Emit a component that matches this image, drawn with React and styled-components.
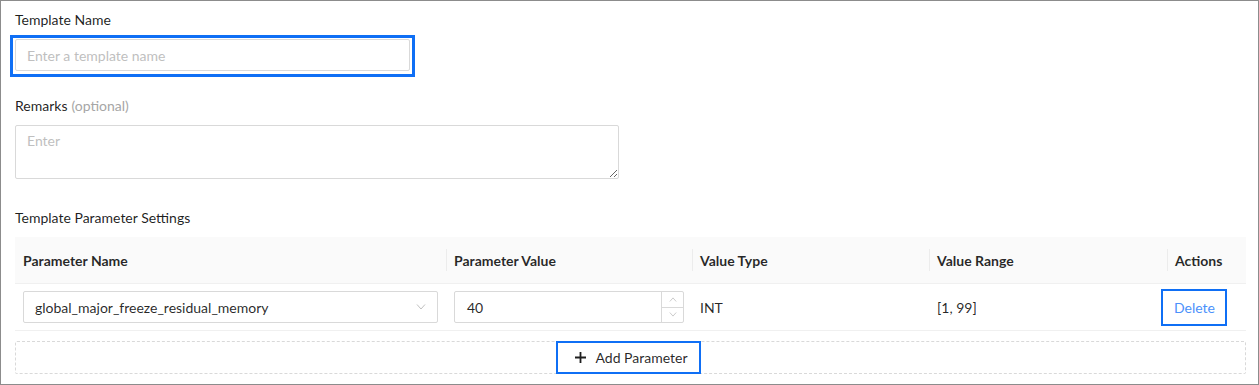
import React from 'react'
import styled, { createGlobalStyle } from 'styled-components'

const GlobalStyle = createGlobalStyle`
    html, body {
        margin: 0;
        padding: 0;
        background: #ffffff;
    }
    body {
        font-family: Lato, "Liberation Sans", sans-serif;
        font-size: 14px;
        color: rgba(0, 0, 0, 0.85);
    }
`

const highlight = '#0f6ff5'

const Frame = styled.div`
    box-sizing: border-box;
    width: 1259px;
    height: 385px;
    border: 1px solid #8c8c8c;
    padding: 8px 12px 0 14px;
    display: flex;
    flex-direction: column;
`

const FormItem = styled.div`
    display: flex;
    flex-direction: column;
    align-items: flex-start;
    margin-bottom: ${props => props.$gap || 24}px;
`

const Label = styled.label`
    line-height: 22px;
    height: 22px;
    margin-bottom: ${props => props.$gap ?? 8}px;
    color: rgba(0, 0, 0, 0.88);
`

const Optional = styled.span`
    color: #a6a6a6;
    margin-left: 4px;
`

const Highlight = styled.div`
    box-sizing: border-box;
    width: 405px;
    height: 42px;
    margin-left: -5px;
    padding: 1px 2px 2px 2px;
    border: 3px solid ${highlight};
`

const TextInput = styled.input`
    box-sizing: border-box;
    display: block;
    width: 395px;
    height: 32px;
    padding: 4px 11px;
    border: 1px solid #d9d9d9;
    border-radius: 2px;
    font: inherit;
    color: rgba(0, 0, 0, 0.85);
    outline: none;

    &::placeholder {
        color: #bfbfbf;
    }
`

const TextArea = styled.textarea`
    box-sizing: border-box;
    width: 604px;
    height: 54px;
    margin: 0;
    padding: 4px 11px;
    border: 1px solid #d9d9d9;
    border-radius: 2px;
    font: inherit;
    line-height: 22px;
    resize: vertical;

    &::placeholder {
        color: #bfbfbf;
    }
`

const Grid = styled.div`
    display: grid;
    grid-template-columns: 431px 246px 237px 238px 1fr;
    width: 1231px;
`

const HeadCell = styled.div`
    position: relative;
    height: 46px;
    display: flex;
    align-items: center;
    padding: 0 8px;
    background: #fafafa;
    border-bottom: 1px solid #f0f0f0;
    font-weight: 700;
    color: rgba(0, 0, 0, 0.85);

    &::before {
        content: '';
        display: ${props => (props.$first ? 'none' : 'block')};
        position: absolute;
        left: 0;
        top: 12px;
        width: 1px;
        height: 22px;
        background: #ececec;
    }
`

const Cell = styled.div`
    height: 46px;
    display: flex;
    align-items: center;
    padding: 0 8px;
    border-bottom: 1px solid #f0f0f0;
`

const Select = styled.div`
    box-sizing: border-box;
    flex: 1;
    height: 32px;
    display: flex;
    align-items: center;
    justify-content: space-between;
    padding: 0 11px;
    border: 1px solid #d9d9d9;
    border-radius: 2px;
`

const NumberBox = styled.div`
    box-sizing: border-box;
    flex: 1;
    height: 32px;
    display: flex;
    border: 1px solid #d9d9d9;
    border-radius: 2px;
`

const NumberValue = styled.div`
    flex: 1;
    display: flex;
    align-items: center;
    padding: 0 12px;
`

const Steps = styled.div`
    width: 21px;
    display: flex;
    flex-direction: column;
    border-left: 1px solid #d9d9d9;
`

const Step = styled.div`
    flex: 1;
    display: flex;
    align-items: center;
    justify-content: center;
    border-top: ${props => (props.$down ? '1px solid #d9d9d9' : 'none')};
`

const LinkButton = styled.button`
    box-sizing: border-box;
    width: 66px;
    height: 37px;
    margin: 1px 0 0 -14px;
    background: transparent;
    border: 2px solid ${highlight};
    font: inherit;
    color: #4b91fb;
    cursor: pointer;
    padding: 0 0 0 1px;
`

const AddArea = styled.div`
    box-sizing: border-box;
    width: 1231px;
    height: 33px;
    margin-top: 10px;
    border: 1px dashed #d9d9d9;
    border-radius: 2px;
    display: flex;
    justify-content: center;
`

const AddButton = styled.button`
    box-sizing: border-box;
    width: 145px;
    height: 33px;
    margin: -1px 0 0 -4px;
    border: 2px solid ${highlight};
    background: #ffffff;
    font: inherit;
    color: rgba(0, 0, 0, 0.85);
    display: flex;
    align-items: center;
    justify-content: center;
    gap: 9px;
    padding: 0 0 0 6px;
    cursor: pointer;
`

const Chevron = ({ up, size = 10, color = '#bfbfbf' }) => (
    <svg width={size} height={size / 2 + 1} viewBox="0 0 10 6" fill="none">
        <path d={up ? 'M1 5.5L5 1L9 5.5' : 'M1 0.5L5 5L9 0.5'} stroke={color} strokeWidth="1" />
    </svg>
)

const Plus = () => (
    <svg width="11" height="11" viewBox="0 0 11 11">
        <path d="M5.5 0V11M0 5.5H11" stroke="#1f1f1f" strokeWidth="1.8" />
    </svg>
)

const columns = ['Parameter Name', 'Parameter Value', 'Value Type', 'Value Range', 'Actions']

export default function App() {
    return (
        <>
            <GlobalStyle />
            <Frame>
                <FormItem $gap={18}>
                    <Label $gap={4}>Template Name</Label>
                    <Highlight>
                        <TextInput placeholder="Enter a template name" />
                    </Highlight>
                </FormItem>
                <FormItem $gap={28}>
                    <Label>
                        Remarks<Optional>(optional)</Optional>
                    </Label>
                    <TextArea placeholder="Enter" />
                </FormItem>
                <FormItem $gap={0}>
                    <Label>Template Parameter Settings</Label>
                    <Grid>
                        {columns.map((col, i) => (
                            <HeadCell key={col} $first={i === 0}>{col}</HeadCell>
                        ))}
                        <Cell>
                            <Select>
                                <span>global_major_freeze_residual_memory</span>
                                <Chevron />
                            </Select>
                        </Cell>
                        <Cell>
                            <NumberBox>
                                <NumberValue>40</NumberValue>
                                <Steps>
                                    <Step><Chevron up size={8} /></Step>
                                    <Step $down><Chevron size={8} /></Step>
                                </Steps>
                            </NumberBox>
                        </Cell>
                        <Cell>INT</Cell>
                        <Cell>[1, 99]</Cell>
                        <Cell>
                            <LinkButton>Delete</LinkButton>
                        </Cell>
                    </Grid>
                    <AddArea>
                        <AddButton>
                            <Plus />
                            Add Parameter
                        </AddButton>
                    </AddArea>
                </FormItem>
            </Frame>
        </>
    )
}
